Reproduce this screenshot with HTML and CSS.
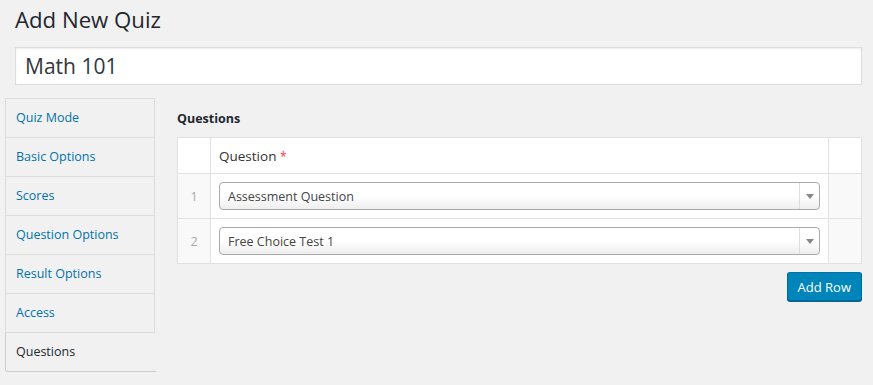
FILE: index.html
```html
<!DOCTYPE html>
<html lang="en">
<head>
    <meta charset="UTF-8">
    <meta name="viewport" content="width=device-width, initial-scale=1.0">
    <title>Add New Quiz</title>
    <link rel="stylesheet" href="styles.css">
</head>
<body>
    <div class="wrap">
        <h1>Add New Quiz</h1>
        <input type="text" class="title-input" value="Math 101">

        <div class="quiz-data">
            <!-- Tabs -->
            <ul class="tabs">
                <li><a href="#">Quiz Mode</a></li>
                <li><a href="#">Basic Options</a></li>
                <li><a href="#">Scores</a></li>
                <li><a href="#">Question Options</a></li>
                <li><a href="#">Result Options</a></li>
                <li><a href="#">Access</a></li>
                <li class="active"><a href="#">Questions</a></li>
            </ul>

            <div class="panel">
                <h3>Questions</h3>
                <table class="repeater">
                    <thead>
                        <tr>
                            <th class="order"></th>
                            <th class="field">Question <span class="required">*</span></th>
                            <th class="remove"></th>
                        </tr>
                    </thead>
                    <tbody>
                        <tr>
                            <td class="order">1</td>
                            <td class="field">
                                <div class="select">
                                    <span class="select-label">Assessment Question</span>
                                    <span class="select-arrow"></span>
                                </div>
                            </td>
                            <td class="remove"></td>
                        </tr>
                        <tr>
                            <td class="order">2</td>
                            <td class="field">
                                <div class="select">
                                    <span class="select-label">Free Choice Test 1</span>
                                    <span class="select-arrow"></span>
                                </div>
                            </td>
                            <td class="remove"></td>
                        </tr>
                    </tbody>
                </table>
                <div class="actions">
                    <button type="button" class="btn">Add Row</button>
                </div>
            </div>
        </div>
    </div>
</body>
</html>
```

FILE: styles.css
```css
body {
    margin: 0;
    background: #f1f1f1;
    color: #23282d;
    font-family: "Open Sans", "Noto Sans", sans-serif;
    font-size: 12.5px;
}
.wrap {
    padding: 0 11px 0 5px;
}
h1 {
    margin: 0;
    padding: 5px 0 0 10px;
    font-size: 22.2px;
    font-weight: 400;
    line-height: 29px;
    height: 42px;
}
.title-input {
    display: block;
    box-sizing: border-box;
    width: calc(100% - 10px);
    margin: 0 0 13px 10px;
    height: 38px;
    padding: 3px 9px;
    border: 1px solid #ddd;
    background: #fff;
    color: #32373c;
    font-family: inherit;
    font-size: 21px;
    outline: none;
    box-shadow: inset 0 1px 2px rgba(0,0,0,.07);
}
.quiz-data {
    display: flex;
    align-items: flex-start;
}
.tabs {
    list-style: none;
    margin: 0;
    padding: 0;
    width: 150px;
    flex-shrink: 0;
}
.tabs li {
    box-sizing: border-box;
    height: 39px;
    border: 1px solid #dcdcdc;
    border-top: none;
}
.tabs li:first-child {
    border-top: 1px solid #dcdcdc;
    height: 40px;
}
.tabs li a {
    display: block;
    padding: 0 10px;
    line-height: 38px;
    color: #0073aa;
    text-decoration: none;
}
.tabs li.active {
    border-right: none;
    border-left-color: #ccc;
    border-bottom-color: #ccc;
    border-bottom-left-radius: 3px;
    margin-right: -1px;
    width: 151px;
}
.tabs li.active a {
    color: #23282d;
}
.panel {
    flex: 1;
    padding: 0 0 0 22px;
}
.panel h3 {
    margin: 0;
    font-size: 12.5px;
    font-weight: 700;
    line-height: 17px;
    padding: 12px 0 10px;
}
.repeater {
    width: 100%;
    border-collapse: collapse;
    border: 1px solid #e1e1e1;
    background: #fff;
}
.repeater th,
.repeater td {
    border: 1px solid #e1e1e1;
    padding: 0;
}
.repeater th {
    height: 35px;
    text-align: left;
    font-weight: 400;
    font-size: 13.5px;
    color: #333;
}
.repeater th.field {
    padding-left: 8px;
}
.required {
    color: #f33;
    font-size: 12px;
}
.repeater .order {
    width: 32px;
    text-align: center;
    color: #aaa;
}
.repeater .remove {
    width: 32px;
}
.repeater tbody .order,
.repeater tbody .remove {
    background: #f9f9f9;
}
.repeater td {
    height: 44px;
}
.repeater td.field {
    padding: 0 8px;
}
.select {
    display: flex;
    align-items: center;
    height: 28px;
    box-sizing: border-box;
    border: 1px solid #aaa;
    border-radius: 4px;
    background: linear-gradient(to bottom, #fff 0%, #fff 50%, #eee 100%);
    color: #444;
}
.select-label {
    flex: 1;
    padding-left: 8px;
}
.select-arrow {
    width: 19px;
    height: 26px;
    border-left: 1px solid #ddd;
    display: flex;
    align-items: center;
    justify-content: center;
}
.select-arrow::after {
    content: "";
    border-top: 5px solid #888;
    border-left: 4px solid transparent;
    border-right: 4px solid transparent;
}
.actions {
    display: flex;
    justify-content: flex-end;
    padding-top: 8px;
}
.btn {
    height: 29px;
    padding: 0 10px;
    background-color: #0085ba;
    border: 1px solid #0073aa;
    border-color: #0073aa #006799 #006799;
    box-shadow: 0 1px 0 #006799;
    color: white;
    font-family: inherit;
    font-size: 13px;
    border-radius: 3px;
    cursor: pointer;
}
```
